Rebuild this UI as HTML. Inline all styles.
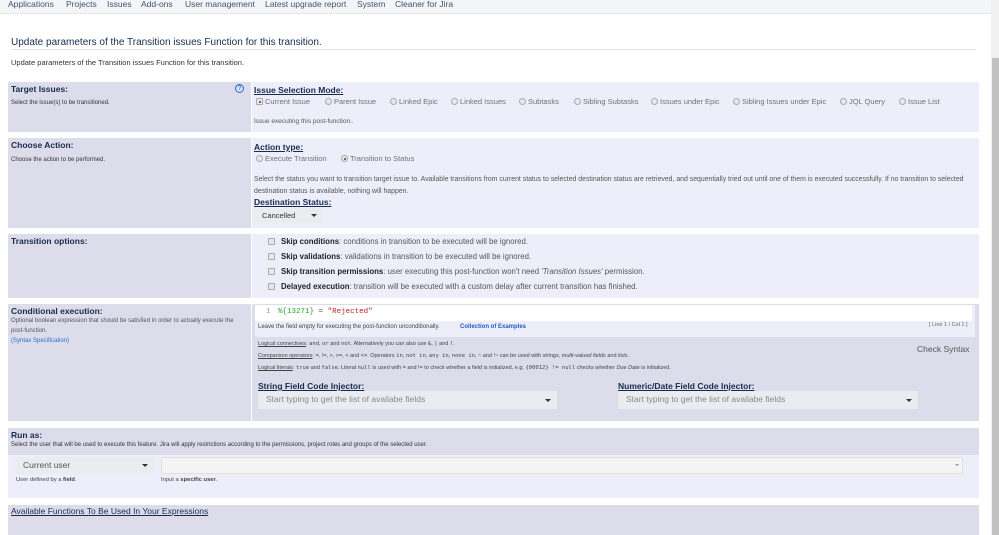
<!DOCTYPE html>
<html><head><meta charset="utf-8"><style>
*{margin:0;padding:0;box-sizing:border-box}
body{width:999px;height:535px;overflow:hidden;background:#fff;font-family:"Liberation Sans",sans-serif;color:#333;position:relative}
.a{position:absolute;white-space:nowrap}
.nav{left:0;top:0;width:991px;height:14px;background:#f4f5f7;border-bottom:1px solid #e6e6e9}
.nav span{position:absolute;top:-1px;font-size:8.5px;color:#42526e}
.L{position:absolute;left:8px;width:243px;background:#dddceb}
.R{position:absolute;left:252px;width:727px;background:#eeeefb}
.h{font-size:8.5px;font-weight:bold;color:#172b4d}
.hu{font-size:8.5px;font-weight:bold;color:#172b4d;text-decoration:underline}
.d{font-size:6px;color:#333}
.o{font-size:7.5px;color:#707070}
.t{font-size:7.8px;color:#555}
.rad{display:inline-block;width:7px;height:7px;border:1px solid #aaa;border-radius:50%;background:#e8e8e8;vertical-align:-1px;margin-right:2px;position:relative}
.rad.on::after{content:"";position:absolute;left:1.5px;top:1.5px;width:2px;height:2px;border-radius:50%;background:#444}
.cb{display:inline-block;width:7px;height:7px;border:1px solid #aaa;background:#e8e8e8;border-radius:1px;vertical-align:-1px;margin-right:6px}
.sel{position:absolute;background:#ebecf0;font-size:8.5px;color:#888;padding:3px 8px}
.car{position:absolute;width:0;height:0;border-left:3px solid transparent;border-right:3px solid transparent;border-top:3px solid #333}
</style></head><body>
<div class="a nav">
<span style="left:8px">Applications</span><span style="left:66px">Projects</span><span style="left:107px">Issues</span><span style="left:141px">Add-ons</span><span style="left:185px">User management</span><span style="left:265px">Latest upgrade report</span><span style="left:357px">System</span><span style="left:395px">Cleaner for Jira</span>
</div>
<div class="a" style="left:991px;top:0;width:8px;height:535px;background:#f0f0f0"></div>
<div class="a" style="left:992px;top:58px;width:7px;height:477px;background:#c1c1c1"></div>

<div class="a" style="left:11px;top:37px;font-size:10px;color:#172b4d">Update parameters of the Transition issues Function for this transition.</div>
<div class="a" style="left:11px;top:49px;width:965px;height:1px;background:#e4e4e4"></div>
<div class="a" style="left:11px;top:58px;font-size:7.5px;color:#333">Update parameters of the Transition issues Function for this transition.</div>

<div class="L" style="top:82px;height:50px"></div><div class="R" style="top:82px;height:50px"></div>
<div class="a h" style="left:11px;top:84px">Target Issues:</div>
<div class="a d" style="left:11px;top:100px">Select the issue(s) to be transitioned.</div>
<div class="a" style="left:235px;top:84px;width:9px;height:9px;border:1px solid #2d6dcc;border-radius:50%;font-size:7px;color:#2d6dcc;text-align:center;line-height:7px">?</div>
<div class="a hu" style="left:254px;top:85px">Issue Selection Mode:</div>
<div class="a o" style="left:256px;top:97px"><span class="rad on" style="border-radius:1px"></span>Current Issue</div>
<div class="a o" style="left:325px;top:97px"><span class="rad"></span>Parent Issue</div>
<div class="a o" style="left:390px;top:97px"><span class="rad"></span>Linked Epic</div>
<div class="a o" style="left:451px;top:97px"><span class="rad"></span>Linked Issues</div>
<div class="a o" style="left:519px;top:97px"><span class="rad"></span>Subtasks</div>
<div class="a o" style="left:574px;top:97px"><span class="rad"></span>Sibling Subtasks</div>
<div class="a o" style="left:651px;top:97px"><span class="rad"></span>Issues under Epic</div>
<div class="a o" style="left:733px;top:97px"><span class="rad"></span>Sibling Issues under Epic</div>
<div class="a o" style="left:840px;top:97px"><span class="rad"></span>JQL Query</div>
<div class="a o" style="left:899px;top:97px"><span class="rad"></span>Issue List</div>
<div class="a" style="left:254px;top:118px;font-size:6.5px;color:#555">Issue executing this post-function..</div>

<div class="L" style="top:138px;height:90px"></div><div class="R" style="top:138px;height:90px"></div>
<div class="a h" style="left:11px;top:140px">Choose Action:</div>
<div class="a d" style="left:11px;top:157px">Choose the action to be performed.</div>
<div class="a hu" style="left:254px;top:142px">Action type:</div>
<div class="a o" style="left:256px;top:154px"><span class="rad"></span>Execute Transition</div>
<div class="a o" style="left:341px;top:154px"><span class="rad on"></span>Transition to Status</div>
<div class="a" style="left:254px;top:174px;font-size:6.9px;color:#555;line-height:12px;white-space:normal;width:722px">Select the status you want to transition target issue to. Available transitions from current status to selected destination status are retrieved, and sequentially tried out until one of them is executed successfully. If no transition to selected destination status is available, nothing will happen.</div>
<div class="a hu" style="left:254px;top:197px">Destination Status:</div>
<div class="sel" style="left:254px;top:208px;width:68px;height:15px;color:#333;font-size:7.5px">Cancelled</div>
<div class="car" style="left:311px;top:214px"></div>

<div class="L" style="top:234px;height:64px"></div><div class="R" style="top:234px;height:64px"></div>
<div class="a h" style="left:11px;top:236px">Transition options:</div>
<div class="a t" style="left:268px;top:237px"><span class="cb"></span><b style="color:#222">Skip conditions</b>: conditions in transition to be executed will be ignored.</div>
<div class="a t" style="left:268px;top:252px"><span class="cb"></span><b style="color:#222">Skip validations</b>: validations in transition to be executed will be ignored.</div>
<div class="a t" style="left:268px;top:267px"><span class="cb"></span><b style="color:#222">Skip transition permissions</b>: user executing this post-function won't need <i>'Transition Issues'</i> permission.</div>
<div class="a t" style="left:268px;top:282px"><span class="cb"></span><b style="color:#222">Delayed execution</b>: transition will be executed with a custom delay after current transition has finished.</div>

<div class="L" style="top:304px;height:117px"></div><div class="a" style="left:252px;top:304px;width:727px;height:117px;background:#dddceb"></div>
<div class="a" style="left:255px;top:305px;width:720px;height:32px;background:#eeeefb"></div>
<div class="a" style="left:255px;top:305px;width:717px;height:16px;background:#fff"></div>
<div class="a" style="left:266px;top:308px;font-family:'Liberation Mono',monospace;font-size:7.5px;color:#999">1</div>
<div class="a" style="left:278px;top:308px;font-family:'Liberation Mono',monospace;font-size:7.5px"><span style="color:#2a9d2a">%{13271}</span> <span style="color:#555">=</span> <span style="color:#b22">"Rejected"</span></div>
<div class="a" style="left:258px;top:324px;font-size:6px;color:#444">Leave the field empty for executing the post-function unconditionally.</div>
<div class="a" style="left:460px;top:324px;font-size:6px;color:#1a5cc8;font-weight:bold">Collection of Examples</div>
<div class="a" style="left:929px;top:322px;font-size:5.5px;color:#666">[ Line 1 / Col 1 ]</div>
<div class="a h" style="left:11px;top:306px">Conditional execution:</div>
<div class="a" style="left:11px;top:316px;font-size:6px;color:#555;line-height:10px;white-space:normal;width:235px">Optional boolean expression that should be satisfied in order to actually execute the post-function.<br><span style="color:#2d6dcc">(Syntax Specification)</span></div>
<div class="a" style="left:258px;top:341px;font-size:5.5px;color:#444"><u>Logical connectives</u>: <tt>and</tt>, <tt>or</tt> and <tt>not</tt>. Alternatively you can also use <tt>&amp;</tt>, <tt>|</tt> and <tt>!</tt>.</div>
<div class="a" style="left:258px;top:353px;font-size:5.5px;color:#444"><u>Comparison operators</u>: =, !=, &gt;, &gt;=, &lt; and &lt;=. Operators <tt>in</tt>, <tt>not in</tt>, <tt>any in</tt>, <tt>none in</tt>, ~ and !~ can be used with <i>strings, multi-valued fields</i> and <i>lists</i>.</div>
<div class="a" style="left:258px;top:365px;font-size:5.5px;color:#444"><u>Logical literals</u>: <tt>true</tt> and <tt>false</tt>. Literal <tt>null</tt> is used with = and != to check whether a field is initialized, e.g. <tt>{00012} != null</tt> checks whether <i>Due Date</i> is initialized.</div>
<div class="a" style="left:917px;top:344px;font-size:8.5px;color:#555">Check Syntax</div>
<div class="a hu" style="left:258px;top:381px">String Field Code Injector:</div>
<div class="sel" style="left:258px;top:391px;width:299px;height:18px">Start typing to get the list of availabe fields</div>
<div class="car" style="left:545px;top:399px"></div>
<div class="a hu" style="left:618px;top:381px">Numeric/Date Field Code Injector:</div>
<div class="sel" style="left:618px;top:391px;width:300px;height:18px">Start typing to get the list of availabe fields</div>
<div class="car" style="left:906px;top:399px"></div>

<div class="a" style="left:8px;top:428px;width:971px;height:27px;background:#dddceb"></div>
<div class="a" style="left:8px;top:455px;width:971px;height:43px;background:#eeeefb"></div>
<div class="a h" style="left:11px;top:430px">Run as:</div>
<div class="a d" style="left:11px;top:442px">Select the user that will be used to execute this feature. Jira will apply restrictions according to the permissions, project roles and groups of the selected user.</div>
<div class="sel" style="left:15px;top:457px;width:139px;height:17px;color:#555">Current user</div>
<div class="car" style="left:142px;top:464px"></div>
<div class="a" style="left:161px;top:457px;width:802px;height:17px;background:#f4f4f4;border:1px solid #e0e0e0;border-radius:2px"></div>
<div class="car" style="left:955px;top:464px;border-top-color:#999;border-width:2.5px 2px 0"></div>
<div class="a" style="left:16px;top:477px;font-size:5.8px;color:#444">User defined by a <b>field</b>.</div>
<div class="a" style="left:161px;top:477px;font-size:5.8px;color:#444">Input a <b>specific user</b>.</div>

<div class="a" style="left:8px;top:505px;width:971px;height:30px;background:#dddceb"></div>
<div class="a" style="left:11px;top:506px;font-size:8.5px;color:#172b4d;text-decoration:underline">Available Functions To Be Used In Your Expressions</div>
</body></html>
